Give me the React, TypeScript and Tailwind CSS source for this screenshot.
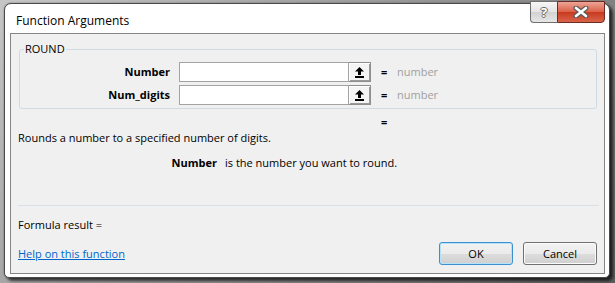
export default function App() {
  return (
    <div className="h-[283px] w-[615px] overflow-hidden bg-[linear-gradient(135deg,#c6c6c6,#8a8a8a_60%,#5c5c5c)] pl-[4px] pt-[3px] font-['Open_Sans',sans-serif] text-[11px] leading-[16px] text-black">
      {/* Window */}
      <div className="relative flex h-[275px] w-[606px] flex-col rounded-t-[7px] rounded-b-[5px] border border-[#4a4a4a] bg-white pb-[3px] pl-[5px] pr-[4px] shadow-[3px_3px_3px_rgba(0,0,0,0.65),0_0_2px_rgba(0,0,0,0.4)]">
        {/* Title bar */}
        <div className="flex h-[29px] items-center pl-[6px] pt-[4px] text-[12px]">
          Function Arguments
        </div>

        {/* Caption buttons */}
        <div className="absolute right-[4px] top-[-3px] flex">
          <div className="flex h-[22px] w-[27px] items-center justify-center rounded-bl-[4px] border border-r-0 border-[#6f6f6f] bg-[linear-gradient(180deg,#f7f7f7,#e3e3e3_50%,#d2d2d2_51%,#e6e6e6)]">
            <span className="text-[13px] font-bold leading-none text-white [text-shadow:1px_0_#6a6a6a,-1px_0_#6a6a6a,0_1px_#6a6a6a,0_-1px_#6a6a6a]">
              ?
            </span>
          </div>
          <div className="flex h-[22px] w-[48px] items-center justify-center rounded-br-[4px] border border-[#6e2b21] bg-[linear-gradient(180deg,#eca597,#db5f46_50%,#c8391f_51%,#d9644a)]">
            <svg width="16" height="12" viewBox="0 0 16 12">
              <path d="M3 2 L13 10 M13 2 L3 10" stroke="#5a5a5a" strokeWidth="5" strokeLinecap="round" />
              <path d="M3 2 L13 10 M13 2 L3 10" stroke="#ffffff" strokeWidth="2.6" strokeLinecap="round" />
            </svg>
          </div>
        </div>

        {/* Client area */}
        <div className="flex flex-1 flex-col border border-[#858585] bg-[#f0f0f0]">
          <fieldset className="ml-[8px] mr-[7px] mt-[7px] rounded-[3px] border border-[#d0dae2] pb-[3px] pt-[5px]">
            <legend className="ml-[4px] px-[1px] leading-[16px]">ROUND</legend>
            <ArgRow label="Number" />
            <div className="h-[3px]" />
            <ArgRow label="Num_digits" />
          </fieldset>

          <div className="ml-[370px] mt-[5px] h-[16px] font-bold">=</div>
          <div className="ml-[7px]">Rounds a number to a specified number of digits.</div>
          <div className="mt-[9px] flex">
            <div className="w-[206px] text-right font-bold">Number</div>
            <div className="ml-[8px]">is the number you want to round.</div>
          </div>

          <div className="ml-[7px] mr-[5px] mt-[34px] h-[1px] bg-[#d9e0e7]" />

          <div className="ml-[7px] mt-[11px]">Formula result =</div>

          <div className="mt-[9px] flex h-[23px] items-center pl-[7px] pr-[7px]">
            <span className="text-[#0066cc] underline">Help on this function</span>
            <div className="flex-1" />
            <button className="h-[23px] w-[74px] rounded-[3px] border border-[#3c8fd0] bg-[linear-gradient(180deg,#f2f2f2,#ebebeb_50%,#dddddd_51%,#cfcfcf)] shadow-[inset_0_0_0_1px_#b5e2f8] leading-[16px]">
              OK
            </button>
            <button className="ml-[10px] h-[23px] w-[74px] rounded-[3px] border border-[#707070] bg-[linear-gradient(180deg,#f2f2f2,#ebebeb_50%,#dddddd_51%,#cfcfcf)] shadow-[inset_0_0_0_1px_#fbfbfb] leading-[16px]">
              Cancel
            </button>
          </div>
        </div>
      </div>
    </div>
  );
}

function ArgRow({ label }: { label: string }) {
  return (
    <div className="flex h-[20px] items-center">
      <div className="w-[150px] text-right font-bold">{label}</div>
      <div className="ml-[9px] h-[20px] w-[170px] border border-[#a3a3a3] bg-white" />
      <div className="flex h-[20px] w-[22px] items-center justify-center border border-l-0 border-[#8e8e8e] bg-[#f4f4f4] shadow-[inset_1px_1px_0_#ffffff,inset_-1px_-1px_0_#9a9a9a]">
        <svg width="9" height="11" viewBox="0 0 9 11">
          <path d="M4.5 0 L9 4.5 H6 V8 H3 V4.5 H0 Z" fill="#000" />
          <rect x="0" y="9" width="9" height="2" fill="#000" />
        </svg>
      </div>
      <div className="ml-[10px] w-[16px] font-bold">=</div>
      <div className="text-[#a0a0a0]">number</div>
    </div>
  );
}
